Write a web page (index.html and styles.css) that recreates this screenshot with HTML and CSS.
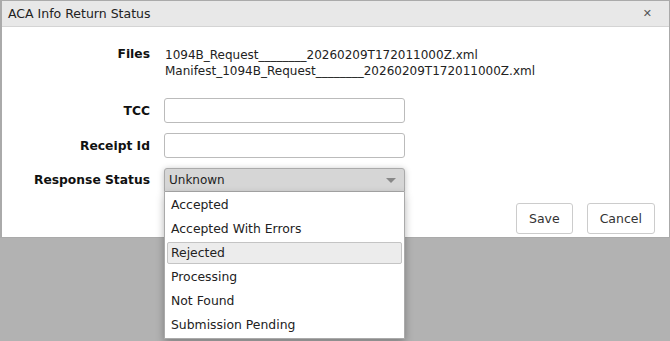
FILE: index.html
```html
<!DOCTYPE html>
<html lang="en">
<head>
    <meta charset="UTF-8">
    <title>ACA Info Return Status</title>
    <link rel="stylesheet" href="styles.css">
</head>
<body>

<div class="dialog">
    <div class="dialog-title">
        <span>ACA Info Return Status</span>
        <span class="close">&#x2715;</span>
    </div>
    <div class="dialog-body">
        <div class="form-grid">
            <label class="files-label">Files</label>
            <div class="files">
                <div>1094B_Request________20260209T172011000Z.xml</div>
                <div>Manifest_1094B_Request________20260209T172011000Z.xml</div>
            </div>

            <label>TCC</label>
            <input type="text" class="field">

            <label>Receipt Id</label>
            <input type="text" class="field">

            <label>Response Status</label>
            <div class="select-wrap">
                <div class="select">
                    <span>Unknown</span>
                    <span class="arrow"></span>
                </div>
                <ul class="options">
                    <li>Accepted</li>
                    <li>Accepted With Errors</li>
                    <li class="hover">Rejected</li>
                    <li>Processing</li>
                    <li>Not Found</li>
                    <li>Submission Pending</li>
                </ul>
            </div>
        </div>
        <div class="buttons">
            <button>Save</button>
            <button>Cancel</button>
        </div>
    </div>
</div>

</body>
</html>
```

FILE: styles.css
```css
html {
    height: 100%;
}
body {
    margin: 0;
    height: 100%;
    background-color: #b2b2b2;
    font-family: "DejaVu Sans", Verdana, sans-serif;
    font-size: 12px;
    color: #222;
}
.dialog {
    position: relative;
    background-color: white;
    border: 1px solid #aaa;
    border-left-width: 2px;
    height: 236px;
}
.dialog-title {
    display: flex;
    justify-content: space-between;
    align-items: center;
    height: 25px;
    padding: 0 17px 0 6px;
    background-color: #e8e8e8;
    border-bottom: 1px solid #d4d4d4;
    font-size: 12.5px;
}
.close {
    color: #555;
    font-weight: bold;
    font-size: 11px;
}
.dialog-body {
    padding: 20px 14px 0 0;
}
.form-grid {
    display: grid;
    grid-template-columns: 148px 241px;
    column-gap: 14px;
    row-gap: 10px;
    align-items: center;
}
.form-grid label {
    text-align: right;
    font-weight: bold;
    font-size: 12.3px;
    color: #111;
}
.files-label {
    align-self: start;
}
.files {
    line-height: 16px;
    margin-bottom: 9px;
    padding-left: 1px;
}
.field {
    height: 25px;
    box-sizing: border-box;
    border: 1px solid #bbb;
    border-radius: 3px;
    margin: 0;
}
.select-wrap {
    position: relative;
    z-index: 10;
}
.select {
    display: flex;
    justify-content: space-between;
    align-items: center;
    height: 24px;
    box-sizing: border-box;
    padding: 0 8px 0 4px;
    background-color: #d6d6d6;
    border: 1px solid #aaa;
    border-radius: 3px 3px 0 0;
    box-shadow: 0 1px 6px rgba(0, 0, 0, 0.25);
}
.arrow {
    border-left: 5px solid transparent;
    border-right: 5px solid transparent;
    border-top: 5px solid #888;
}
.options {
    position: absolute;
    z-index: 20;
    top: 24px;
    left: 0;
    width: 241px;
    box-sizing: border-box;
    margin: 0;
    padding: 2px 2px 0 2px;
    list-style: none;
    background-color: white;
    border: 1px solid #aaa;
    border-top: none;
    box-shadow: 0 3px 8px rgba(0, 0, 0, 0.3);
    font-size: 12.4px;
}
.options li {
    height: 22px;
    box-sizing: border-box;
    line-height: 20px;
    padding: 0 3px;
    margin-bottom: 2px;
    border: 1px solid transparent;
    border-radius: 2px;
}
.options li.hover {
    background-color: #ececec;
    border-color: #c4c4c4;
}
.buttons {
    display: flex;
    justify-content: flex-end;
    gap: 14px;
    margin-top: 11px;
}
.buttons button {
    height: 31px;
    padding: 0 12px;
    font-family: inherit;
    font-size: 12.5px;
    color: #333;
    background-color: white;
    border: 1px solid #ccc;
    border-radius: 3px;
}
```
